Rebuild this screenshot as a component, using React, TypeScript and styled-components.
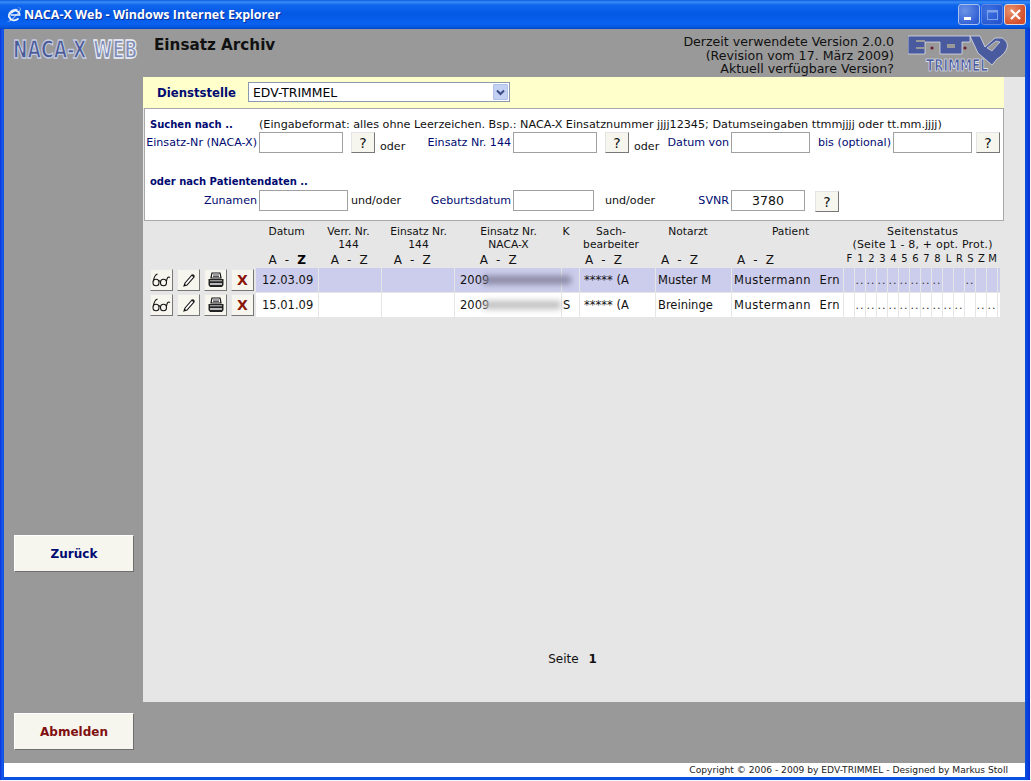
import styled, { createGlobalStyle } from "styled-components";

const GlobalStyle = createGlobalStyle`
  html, body {
    margin: 0;
    padding: 0;
    height: 100%;
    overflow: hidden;
    background: #f4f4f4;
  }
  * {
    box-sizing: border-box;
  }
`;

const Window = styled.div`
  width: 1030px;
  height: 780px;
  display: flex;
  flex-direction: column;
  font-family: "DejaVu Sans", Verdana, sans-serif;
  background: linear-gradient(90deg, #0831d9 0, #1658ea 2px, #0a50e4 4px, #0a50e4 1025px, #0a3ed8 1028px, #0831d9 100%);
`;

const TitleBar = styled.div`
  height: 29px;
  flex: none;
  display: flex;
  align-items: center;
  padding: 0 4px 0 5px;
  background: linear-gradient(180deg, #0a5be0 0, #3a8cf5 2px, #0f66ee 5px, #0458e4 14px, #0a62f0 24px, #0453d8 28px, #0340b8 100%);
`;

const TitleText = styled.div`
  margin-left: 1px;
  font-family: "Open Sans", sans-serif;
  font-weight: 700;
  font-size: 12.5px;
  color: #fff;
  text-shadow: 1px 1px 0 #0a2f9a;
  white-space: nowrap;
`;

const WindowButtons = styled.div`
  margin-left: auto;
  display: flex;
  gap: 1px;
`;

const WindowButton = styled.div<{ $close?: boolean; $dim?: boolean }>`
  width: 22px;
  height: 21px;
  border: 1px solid ${(p) => (p.$close ? "#e6d8d2" : p.$dim ? "#5f86e0" : "#a9c0ee")};
  border-radius: 3px;
  display: flex;
  align-items: center;
  justify-content: center;
  background: ${(p) =>
    p.$close
      ? "radial-gradient(circle at 30% 30%, #e8946e, #d5512e 70%)"
      : p.$dim
        ? "radial-gradient(circle at 30% 30%, #3f72e0, #2556d0 80%)"
        : "radial-gradient(circle at 30% 30%, #6d94e6, #2e5dd4 80%)"};
`;

const Frame = styled.div`
  flex: 1;
  margin: 0 5px 3px 4px;
  display: flex;
  flex-direction: column;
  min-height: 0;
`;

const Body = styled.div`
  flex: 1;
  display: flex;
  background: #999;
  min-height: 0;
`;

const Sidebar = styled.div`
  width: 139px;
  flex: none;
  display: flex;
  flex-direction: column;
  padding: 4px 0 13px 10px;
`;

const LogoMark = styled.svg`
  flex: none;
  margin-left: -2px;
`;

const SideButton = styled.button<{ $red?: boolean }>`
  width: 120px;
  height: 37px;
  flex: none;
  padding: 0;
  background: #f6f6ef;
  border: 1px solid;
  border-color: #fff #6f6f6f #6f6f6f #fff;
  font-family: "DejaVu Sans", Verdana, sans-serif;
  font-weight: 700;
  font-size: 12px;
  color: ${(p) => (p.$red ? "#801010" : "#000a70")};
`;

const BackButton = styled(SideButton)`
  margin-top: auto;
  margin-bottom: 141px;
`;

const Main = styled.div`
  flex: 1;
  display: flex;
  flex-direction: column;
  min-width: 0;
`;

const Header = styled.div`
  height: 48px;
  flex: none;
  display: flex;
`;

const PageTitle = styled.h1`
  margin: 7px 0 0 11px;
  font-size: 15.2px;
  line-height: 18px;
  font-weight: 700;
  color: #111;
`;

const VersionInfo = styled.div`
  margin-left: auto;
  margin-top: 6px;
  font-size: 12.6px;
  line-height: 13.7px;
  text-align: right;
  color: #111;
  white-space: nowrap;
`;

const BrandMark = styled.svg`
  flex: none;
  margin: 6px 17px 0 14px;
`;

const Content = styled.div`
  height: 625px;
  flex: none;
  background: #e6e6e6;
  display: flex;
  flex-direction: column;
`;

const UnitBar = styled.div`
  width: 861px;
  height: 31px;
  flex: none;
  display: flex;
  align-items: center;
  padding-left: 14px;
  background: #ffffcc;
`;

const UnitLabel = styled.span`
  width: 91px;
  font-weight: 700;
  font-size: 11.7px;
  color: #000a70;
`;

const FakeSelect = styled.div`
  width: 262px;
  height: 20px;
  margin-top: -1px;
  display: flex;
  align-items: center;
  justify-content: space-between;
  padding: 1px 1px 0 4px;
  background: #fff;
  border: 1px solid #8a9ab0;
  font-size: 12.4px;
  color: #000;
`;

const SelectArrow = styled.span`
  width: 15px;
  height: 16px;
  margin-top: -1px;
  display: flex;
  align-items: center;
  justify-content: center;
  background: #c3d0f2;
  border: 1px solid #b4c2ea;
  border-radius: 1px;
`;

const SearchPanel = styled.div`
  width: 860px;
  height: 113px;
  flex: none;
  margin-left: 1px;
  padding-top: 7px;
  background: #fff;
  border: 1px solid #a8a8a8;
  font-size: 11.1px;
`;

const Row = styled.div<{ $height: number; $top?: number }>`
  display: flex;
  align-items: center;
  height: ${(p) => p.$height}px;
  margin-top: ${(p) => p.$top ?? 0}px;
  white-space: nowrap;
`;

const SectionTitle = styled.span`
  margin-left: 5px;
  width: 109px;
  font-size: 10px;
  font-weight: 700;
  color: #000a70;
`;

const Hint = styled.span`
  font-size: 11.2px;
  color: #111;
`;

const FieldLabel = styled.label<{ $width: number }>`
  width: ${(p) => p.$width}px;
  padding-right: 2px;
  text-align: right;
  color: #000a70;
`;

const FieldInput = styled.input<{ $width: number }>`
  width: ${(p) => p.$width}px;
  height: 21px;
  padding: 0;
  border: 1px solid #a0a0a0;
  background: #fff;
  font-family: inherit;
  font-size: 12.5px;
  text-align: center;
  color: #111;
  outline: none;
`;

const HelpButton = styled.button<{ $ml: number; $top?: number }>`
  width: 24px;
  height: 21px;
  margin-left: ${(p) => p.$ml}px;
  margin-top: ${(p) => p.$top ?? 0}px;
  padding: 0;
  background: #f6f6ef;
  border: 1px solid;
  border-color: #e4e4e4 #777 #777 #e4e4e4;
  font-family: inherit;
  font-size: 14px;
  color: #111;
`;

const Joiner = styled.span<{ $ml: number; $width: number; $low?: boolean }>`
  margin-left: ${(p) => p.$ml}px;
  width: ${(p) => p.$width}px;
  margin-top: ${(p) => (p.$low ? 8 : 0)}px;
  color: #111;
`;

const ResultTable = styled.table`
  width: 857px;
  margin: 1px 0 0 1px;
  table-layout: fixed;
  border-collapse: separate;
  border-spacing: 0;
  color: #111;
`;

const HeadCell = styled.th<{ $left?: number; $right?: number }>`
  padding: 3px ${(p) => p.$right ?? 0}px 0 ${(p) => p.$left ?? 0}px;
  font-weight: 400;
  font-size: 10.7px;
  line-height: 13px;
  vertical-align: top;
  text-align: center;
  height: 29px;
  white-space: nowrap;
`;

const StatusCaption = styled(HeadCell)`
  font-size: 11px;
  letter-spacing: 0.2px;
`;

const SortCell = styled.th<{ $left?: number; $right?: number; $align?: string }>`
  padding: 0 ${(p) => p.$right ?? 0}px 0 ${(p) => p.$left ?? 0}px;
  height: 17px;
  font-weight: 400;
  font-size: 12px;
  letter-spacing: 0.4px;
  word-spacing: 3.5px;
  white-space: pre;
  text-align: ${(p) => p.$align ?? "center"};
`;

const ActiveSort = styled.b`
  color: #000;
`;

const StatusHead = styled.th`
  padding: 2px 0 0;
  height: 17px;
  font-weight: 400;
  font-size: 10px;
  text-align: center;
  vertical-align: top;
  overflow: hidden;
`;

const DataRow = styled.tr<{ $active?: boolean }>`
  background: ${(p) => (p.$active ? "#ccccec" : "#fff")};
  height: 25px;
`;

const ActionCell = styled.td`
  padding: 1px 0 0 6px;
  vertical-align: top;
  background: #e6e6e6;
`;

const ActionGroup = styled.div`
  display: flex;
  gap: 4px;
`;

const IconButton = styled.button`
  width: 23px;
  height: 22px;
  padding: 0;
  display: flex;
  align-items: center;
  justify-content: center;
  background: #f6f6ef;
  border: 1px solid;
  border-color: #e8e8e8 #777 #777 #e8e8e8;
  font-family: inherit;
  font-weight: 700;
  font-size: 14px;
  color: #8a1508;
`;

const Cell = styled.td<{ $pad?: number; $spread?: boolean }>`
  position: relative;
  padding: 0 0 0 ${(p) => p.$pad ?? 5}px;
  font-size: 11.5px;
  letter-spacing: ${(p) => (p.$spread ? "0.5px" : "0")};
  white-space: pre;
  overflow: hidden;
  border-right: 1px solid #e6e6e6;
  border-bottom: 1px solid #e6e6e6;
`;

const DotCell = styled.td`
  padding: 0;
  font-size: 11px;
  text-align: center;
  letter-spacing: 1px;
  overflow: hidden;
  color: #333;
  border-right: 1px solid #e6e6e6;
  border-bottom: 1px solid #e6e6e6;
`;

const NacaCell = styled.td`
  position: relative;
  padding: 0 0 0 5px;
  font-size: 11.5px;
  border-right: 1px solid #e6e6e6;
  border-bottom: 1px solid #e6e6e6;
`;

/* privacy smear over the number in the screenshot */
const Smear = styled.span<{ $dark?: boolean }>`
  position: absolute;
  left: 28px;
  top: 8px;
  height: 8px;
  width: ${(p) => (p.$dark ? 88 : 78)}px;
  background: ${(p) => (p.$dark ? "#8585a0" : "#bdbdbd")};
  filter: blur(3px);
`;

const Pager = styled.div`
  width: 857px;
  margin: auto 0 36px 1px;
  text-align: center;
  font-size: 12px;
  color: #111;
`;

const PagerNumber = styled.b`
  margin-left: 6px;
`;

const BottomBand = styled.div`
  flex: 1;
`;

const Copyright = styled.div`
  height: 14px;
  flex: none;
  padding-right: 17px;
  text-align: right;
  background: #fff;
  font-size: 9.15px;
  line-height: 14px;
  color: #222;
`;

const statusColumns = ["F", "1", "2", "3", "4", "5", "6", "7", "8", "L", "R", "S", "Z", "M"];

const rows = [
  {
    date: "12.03.09",
    k: "",
    doctor: "Muster M",
    active: true,
    status: [0, 1, 1, 1, 1, 1, 1, 1, 1, 0, 0, 1, 0, 0],
  },
  {
    date: "15.01.09",
    k: "S",
    doctor: "Breininge",
    active: false,
    status: [0, 1, 1, 1, 1, 1, 1, 1, 1, 1, 1, 0, 1, 1],
  },
];

function IeIcon() {
  return (
    <svg width="18" height="18" viewBox="0 0 16 16">
      <path d="M3 11 C1 5 8 1 12 3 C9 3 5 6 3 11Z" fill="#dbe7fb" />
      <path d="M1.5 13.5 C4 15 8 11 13 5 C15 3 14 1 11 1.5 C14 1.2 13.8 3 12 5 C8 10 4 14 1.5 13.5Z" fill="#b8cdf2" />
      <path d="M5 8 H13 C13 4 8 3 6 6" fill="none" stroke="#eef4ff" strokeWidth="1.5" />
      <path d="M4 9 C4 13 9 14 12 11" fill="none" stroke="#eef4ff" strokeWidth="1.5" />
    </svg>
  );
}

function GlassesIcon() {
  return (
    <svg width="19" height="14" viewBox="0 0 19 14" fill="none" stroke="#111" strokeWidth="1.1">
      <ellipse cx="4" cy="9.5" rx="3" ry="3.3" />
      <ellipse cx="11.5" cy="9.5" rx="3" ry="3.3" />
      <path d="M7 8.5 C7.5 7.6 8 7.6 8.5 8.5" />
      <path d="M1.2 8.5 C2 4 3.5 1.5 5.5 1" />
      <path d="M14.4 8.5 C15 5 16 3 18 4.5" />
    </svg>
  );
}

function PencilIcon() {
  return (
    <svg width="14" height="16" viewBox="0 0 14 16">
      <path d="M3 11 L10 3 L12 5 L5 13 L2 14Z" fill="#fff" stroke="#111" strokeWidth="1.1" />
      <path d="M10 3 L11 2 L13 4 L12 5Z" fill="#222" />
      <path d="M2 14 L3 12 L4 13Z" fill="#111" />
    </svg>
  );
}

function PrinterIcon() {
  return (
    <svg width="18" height="17" viewBox="0 0 18 17">
      <path d="M5 1 H13 L14 6 H4Z" fill="#fff" stroke="#111" strokeWidth="1.2" />
      <path d="M6 3 H12 M6 4.6 H12" stroke="#111" strokeWidth="0.8" />
      <path d="M1.5 7 H16.5 V13 L15 15 H3 L1.5 13Z" fill="#222" />
      <rect x="3" y="8" width="12" height="1.4" fill="#999" />
      <rect x="3" y="11" width="12" height="2" fill="#bbb" />
    </svg>
  );
}

function ChevronIcon() {
  return (
    <svg width="9" height="7" viewBox="0 0 9 7" fill="none" stroke="#3a4a86" strokeWidth="2">
      <path d="M1 1.5 L4.5 5 L8 1.5" />
    </svg>
  );
}

function NacaLogo() {
  return (
    <LogoMark width="128" height="34" viewBox="0 0 118 22" preserveAspectRatio="none">
      <text
        x="1"
        y="16"
        fontFamily="DejaVu Sans"
        fontWeight="700"
        fontSize="16"
        fill="#4a5a96"
        stroke="#c4cbe0"
        strokeWidth="0.9"
      >
        NACA-X
      </text>
      <text
        x="75"
        y="16"
        fontFamily="DejaVu Sans"
        fontWeight="700"
        fontSize="16"
        fill="#7f8cb8"
        stroke="#eef1f8"
        strokeWidth="0.9"
      >
        WEB
      </text>
    </LogoMark>
  );
}

function EdvLogo() {
  return (
    <BrandMark width="100" height="42" viewBox="0 0 100 42">
      <path
        d="M0 1 H62 V7 H54 V19 H32 V7 H17 V19 H0Z"
        fill="#4a5a9e"
        stroke="#e6e9f4"
        strokeWidth="0.7"
      />
      <path d="M8 6 H17 M8 13 H17" stroke="#999" strokeWidth="2" />
      <circle cx="24" cy="13" r="1.6" fill="#6b2030" />
      <rect x="39" y="9" width="8" height="4" fill="#999" />
      <circle cx="57" cy="13" r="1.6" fill="#6b2030" />
      <path
        d="M62 1 H72 L77 12 L87 3 H94 C103 8 100 17 89 24 L84 30 L70 18Z"
        fill="#4a5a9e"
        stroke="#e6e9f4"
        strokeWidth="0.7"
      />
      <path d="M79 13 L88 6 L92 7 L84 16Z" fill="#999" stroke="#e6e9f4" strokeWidth="0.6" />
      <svg x="17" y="21" width="65" height="20" viewBox="0 0 62 14" preserveAspectRatio="none">
        <text
          x="1"
          y="10.5"
          fontFamily="DejaVu Sans"
          fontWeight="700"
          fontSize="11.5"
          fill="#4a5a9e"
          stroke="#eef0f8"
          strokeWidth="0.5"
        >
          TRIMMEL
        </text>
      </svg>
    </BrandMark>
  );
}

export default function App() {
  return (
    <>
      <GlobalStyle />
      <Window>
        <TitleBar>
          <IeIcon />
          <TitleText>NACA-X Web - Windows Internet Explorer</TitleText>
          <WindowButtons>
            <WindowButton>
              <svg width="13" height="13" viewBox="0 0 13 13">
                <rect x="1" y="9" width="7" height="3" fill="#fff" />
              </svg>
            </WindowButton>
            <WindowButton $dim>
              <svg width="13" height="13" viewBox="0 0 13 13" fill="none" stroke="#7fa2ec">
                <rect x="1.5" y="2.5" width="10" height="9" />
                <path d="M1.5 3.5 H11.5" strokeWidth="2" />
              </svg>
            </WindowButton>
            <WindowButton $close>
              <svg width="13" height="13" viewBox="0 0 13 13" stroke="#fff" strokeWidth="2.2">
                <path d="M2 2 L11 11 M11 2 L2 11" />
              </svg>
            </WindowButton>
          </WindowButtons>
        </TitleBar>
        <Frame>
          <Body>
            <Sidebar>
              <NacaLogo />
              <BackButton>Zurück</BackButton>
              <SideButton $red>Abmelden</SideButton>
            </Sidebar>
            <Main>
              <Header>
                <PageTitle>Einsatz Archiv</PageTitle>
                <VersionInfo>
                  Derzeit verwendete Version 2.0.0
                  <br />
                  (Revision vom 17. März 2009)
                  <br />
                  Aktuell verfügbare Version?
                </VersionInfo>
                <EdvLogo />
              </Header>
              <Content>
                <UnitBar>
                  <UnitLabel>Dienststelle</UnitLabel>
                  <FakeSelect>
                    EDV-TRIMMEL
                    <SelectArrow>
                      <ChevronIcon />
                    </SelectArrow>
                  </FakeSelect>
                </UnitBar>
                <SearchPanel>
                  <Row $height={16}>
                    <SectionTitle>Suchen nach ..</SectionTitle>
                    <Hint>
                      (Eingabeformat: alles ohne Leerzeichen. Bsp.: NACA-X Einsatznummer jjjj12345; Datumseingaben ttmmjjjj oder tt.mm.jjjj)
                    </Hint>
                  </Row>
                  <Row $height={21}>
                    <FieldLabel $width={114}>Einsatz-Nr (NACA-X)</FieldLabel>
                    <FieldInput $width={84} />
                    <HelpButton $ml={8}>?</HelpButton>
                    <Joiner $ml={5} $width={25} $low>oder</Joiner>
                    <FieldLabel $width={108}>Einsatz Nr. 144</FieldLabel>
                    <FieldInput $width={84} />
                    <HelpButton $ml={8}>?</HelpButton>
                    <Joiner $ml={5} $width={25} $low>oder</Joiner>
                    <FieldLabel $width={72}>Datum von</FieldLabel>
                    <FieldInput $width={79} />
                    <FieldLabel $width={83}>bis (optional)</FieldLabel>
                    <FieldInput $width={79} />
                    <HelpButton $ml={4}>?</HelpButton>
                  </Row>
                  <Row $height={17} $top={20}>
                    <SectionTitle>oder nach Patientendaten ..</SectionTitle>
                  </Row>
                  <Row $height={21}>
                    <FieldLabel $width={114}>Zunamen</FieldLabel>
                    <FieldInput $width={89} />
                    <Joiner $ml={3} $width={54}>und/oder</Joiner>
                    <FieldLabel $width={108}>Geburtsdatum</FieldLabel>
                    <FieldInput $width={81} />
                    <Joiner $ml={11} $width={54}>und/oder</Joiner>
                    <FieldLabel $width={72}>SVNR</FieldLabel>
                    <FieldInput $width={74} defaultValue="3780" />
                    <HelpButton $ml={10} $top={2}>?</HelpButton>
                  </Row>
                </SearchPanel>
                <ResultTable>
                  <colgroup>
                    <col width={112} />
                    <col width={63} />
                    <col width={63} />
                    <col width={73} />
                    <col width={107} />
                    <col width={18} />
                    <col width={76} />
                    <col width={76} />
                    <col width={112} />
                    {statusColumns.map((c) => (
                      <col key={c} width={11} />
                    ))}
                    <col width={3} />
                  </colgroup>
                  <thead>
                    <tr>
                      <HeadCell />
                      <HeadCell $right={2}>Datum</HeadCell>
                      <HeadCell $right={4}>Verr. Nr.<br />144</HeadCell>
                      <HeadCell>Einsatz Nr.<br />144</HeadCell>
                      <HeadCell>Einsatz Nr.<br />NACA-X</HeadCell>
                      <HeadCell $right={10}>K</HeadCell>
                      <HeadCell $right={14}>Sach-<br />bearbeiter</HeadCell>
                      <HeadCell $right={12}>Notarzt</HeadCell>
                      <HeadCell $left={5}>Patient</HeadCell>
                      <StatusCaption colSpan={15}>Seitenstatus<br />(Seite 1 - 8, + opt. Prot.)</StatusCaption>
                    </tr>
                    <tr>
                      <SortCell />
                      <SortCell>A - <ActiveSort>Z</ActiveSort></SortCell>
                      <SortCell $right={2}>A - Z</SortCell>
                      <SortCell $left={2} $right={14}>A - Z</SortCell>
                      <SortCell $right={20}>A - Z</SortCell>
                      <SortCell />
                      <SortCell $align="left" $left={5}>A - Z</SortCell>
                      <SortCell $align="left" $left={5}>A - Z</SortCell>
                      <SortCell $align="left" $left={5}>A - Z</SortCell>
                      {statusColumns.map((c) => (
                        <StatusHead key={c}>{c}</StatusHead>
                      ))}
                      <StatusHead />
                    </tr>
                  </thead>
                  <tbody>
                    {rows.map((row) => (
                      <DataRow key={row.date} $active={row.active}>
                        <ActionCell>
                          <ActionGroup>
                            <IconButton><GlassesIcon /></IconButton>
                            <IconButton><PencilIcon /></IconButton>
                            <IconButton><PrinterIcon /></IconButton>
                            <IconButton>X</IconButton>
                          </ActionGroup>
                        </ActionCell>
                        <Cell $pad={6}>{row.date}</Cell>
                        <Cell />
                        <Cell />
                        <NacaCell>
                          2009
                          <Smear $dark={row.active} />
                        </NacaCell>
                        <Cell $pad={1}>{row.k}</Cell>
                        <Cell $pad={4}>***** (A</Cell>
                        <Cell $pad={2}>{row.doctor}</Cell>
                        <Cell $pad={2} $spread>Mustermann  Ern</Cell>
                        {row.status.map((on, i) => (
                          <DotCell key={i}>{on ? ".." : ""}</DotCell>
                        ))}
                        <DotCell />
                      </DataRow>
                    ))}
                  </tbody>
                </ResultTable>
                <Pager>
                  Seite <PagerNumber>1</PagerNumber>
                </Pager>
              </Content>
              <BottomBand />
            </Main>
          </Body>
          <Copyright>Copyright © 2006 - 2009 by EDV-TRIMMEL - Designed by Markus Stoll</Copyright>
        </Frame>
      </Window>
    </>
  );
}
